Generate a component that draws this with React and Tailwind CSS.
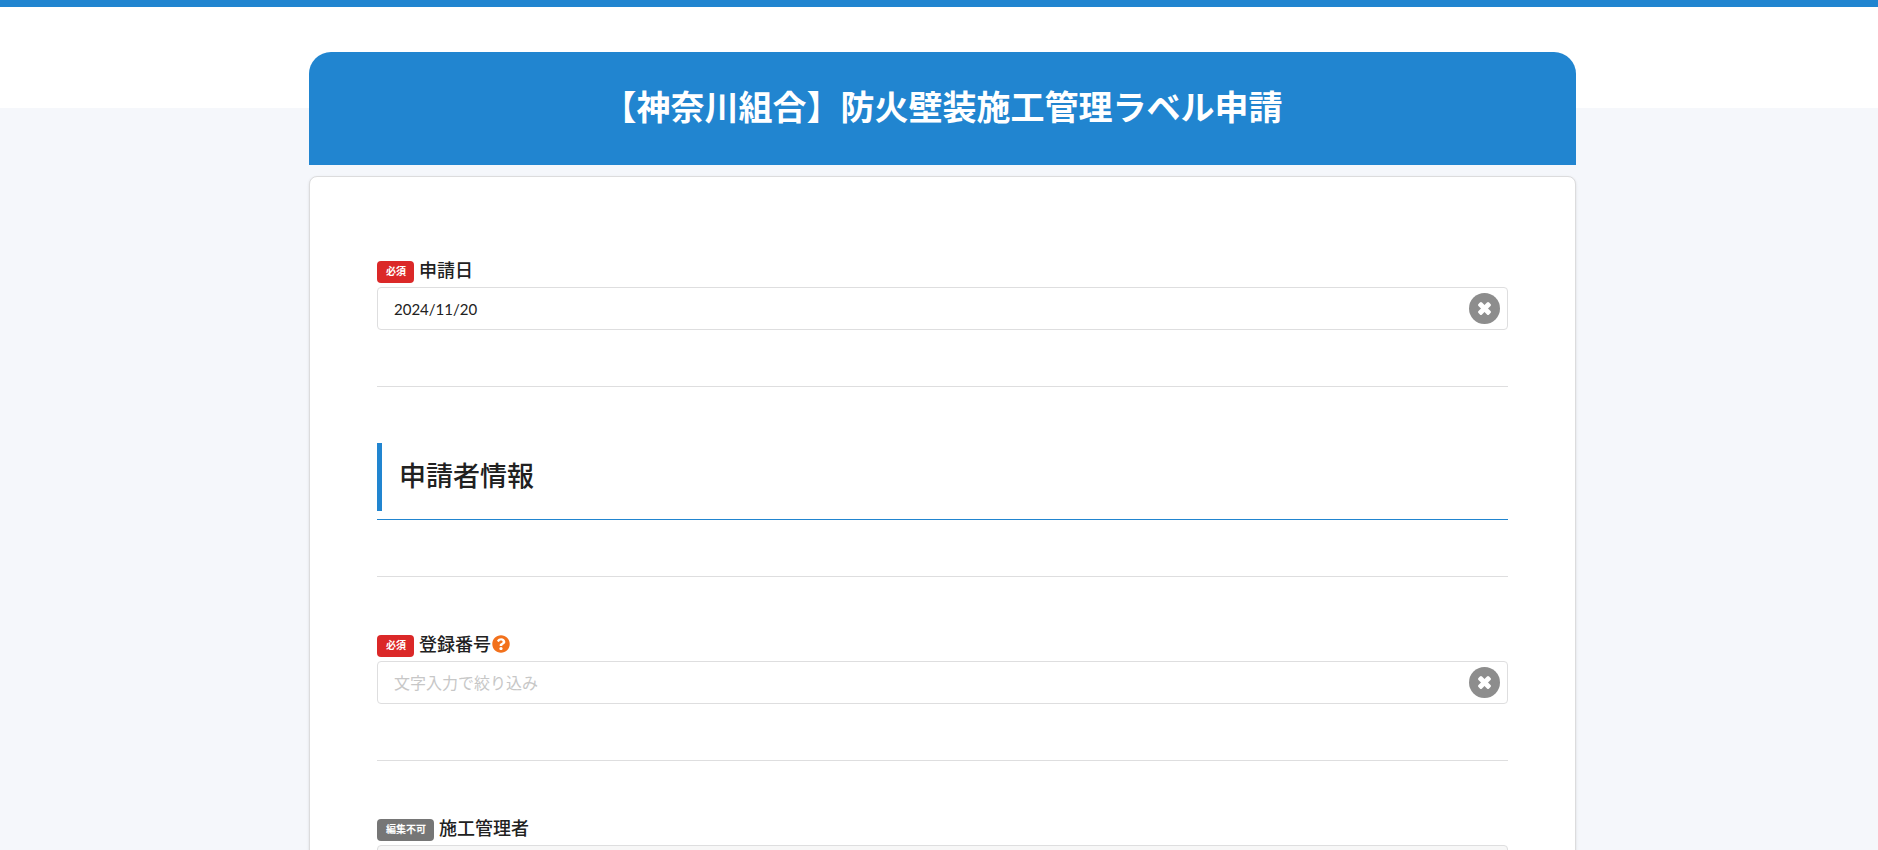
import { useState } from "react";

const Badge = ({ type }) => (
  <span
    className={`flex h-[22px] items-center rounded pr-2 pb-[2px] pl-[9px] text-[10px] leading-none font-bold text-white ${
      type === "required" ? "bg-[#db2828]" : "bg-[#767676]"
    }`}
  >
    {type === "required" ? "必須" : "編集不可"}
  </span>
);

const HelpIcon = () => (
  <svg viewBox="0 0 512 512" className="h-[18px] w-[18px] fill-[#f2711c]" aria-hidden="true">
    <path d="M504 256c0 137-111 248-248 248S8 393 8 256 119 8 256 8s248 111 248 248zM262.700 90c-54.500 0-89.300 23-116.500 63.800-3.500 5.300-2.400 12.400 2.700 16.300l34.700 26.300c5.200 3.900 12.600 3 16.700-2.100 17.900-22.700 30.100-35.800 57.300-35.800 20.400 0 45.700 13.100 45.700 33 0 15-12.400 22.700-32.500 34C247.100 238.500 216 254.900 216 296v4c0 6.600 5.400 12 12 12h56c6.600 0 12-5.400 12-12v-1.300c0-28.500 83.200-29.600 83.200-106.700 0-58-60.200-102-116.500-102zM256 338c-25.400 0-46 20.600-46 46s20.600 46 46 46 46-20.600 46-46-20.600-46-46-46z" />
  </svg>
);

const ClearButton = ({ onClick, label }) => (
  <button
    type="button"
    onClick={onClick}
    aria-label={label}
    className="absolute top-[6px] right-2 flex h-[31px] w-[31px] items-center justify-center rounded-full bg-[#8d8d8d] pb-px"
  >
    <svg viewBox="0 0 15 15" className="h-[15px] w-[15px] fill-white" aria-hidden="true">
      <rect x="0" y="5" width="15" height="5" rx="1.500" transform="rotate(45 7.500 7.500)" />
      <rect x="0" y="5" width="15" height="5" rx="1.500" transform="rotate(-45 7.500 7.500)" />
    </svg>
  </button>
);

const Field = ({ id, label, badge, help, placeholder, initial = "", readOnly }) => {
  const [value, setValue] = useState(initial);
  return (
    <div>
      <div className="flex h-7 items-start pt-[2px]">
        <Badge type={badge} />
        <label htmlFor={id} className="ml-[5px] text-[18px] leading-[18px] font-medium">
          {label}
        </label>
        {help && (
          <button type="button" aria-label="ヘルプ" className="ml-px">
            <HelpIcon />
          </button>
        )}
      </div>
      <div className="relative">
        <input
          id={id}
          type="text"
          value={value}
          placeholder={placeholder}
          readOnly={readOnly}
          onChange={(e) => setValue(e.target.value)}
          className="block h-[43px] w-full rounded border border-[#dededf] bg-white px-4 text-[15px] outline-none placeholder:text-[16px] placeholder:text-[#c7c7c7] read-only:bg-[#f7f7f7] focus:border-[#85b7d9]"
        />
        {!readOnly && <ClearButton onClick={() => setValue("")} label={`${label}をクリア`} />}
      </div>
    </div>
  );
};

const Divider = () => <hr className="my-14 border-t border-[#dededf]" />;

const App = () => {
  return (
    <div className="min-h-screen bg-[#f5f7fb] font-[Lato,'Noto_Sans_CJK_JP',sans-serif] text-[#212121]">
      <div className="h-[108px] border-t-[7px] border-[#2185d0] bg-white" />
      <main className="-mt-14 pl-[7px]">
        <div className="mx-auto max-w-[1267px]">
          <header className="flex h-[113px] items-center justify-center rounded-t-[22px] bg-[#2185d0] px-4 pb-[2px]">
            <h1 className="text-[34px] leading-tight font-bold text-white">
              【神奈川組合】防火壁装施工管理ラベル申請
            </h1>
          </header>

          <form className="mt-[11px] rounded-[8px] border border-[#dcdcdd] bg-white px-[67px] py-[82px] shadow-sm">
            <Field id="date" label="申請日" badge="required" initial="2024/11/20" />
            <Divider />

            {/* Section heading */}
            <div className="border-b border-[#2185d0] pb-2">
              <h2 className="flex h-[68px] items-center border-l-[5px] border-[#2185d0] pb-[2px] pl-[17px] text-[27px] font-medium">
                申請者情報
              </h2>
            </div>
            <Divider />

            <Field
              id="number"
              label="登録番号"
              badge="required"
              placeholder="文字入力で絞り込み"
              help
            />
            <Divider />
            <Field id="manager" label="施工管理者" badge="locked" readOnly />
          </form>
        </div>
      </main>
    </div>
  );
};

export default App;
